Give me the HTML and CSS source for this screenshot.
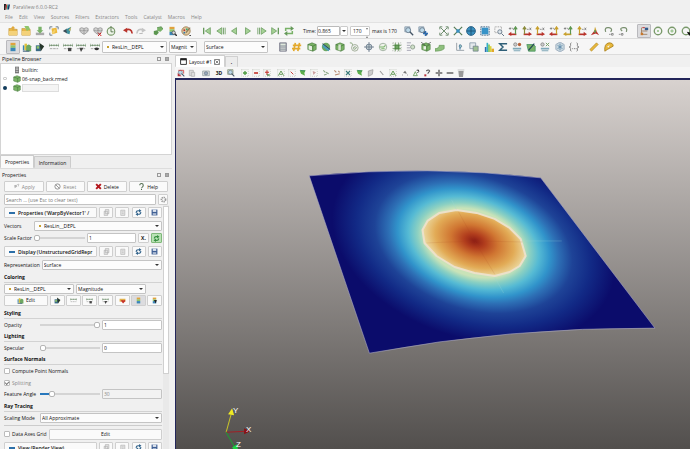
FILE: index.html
```
<!DOCTYPE html>
<html lang="en">
  <head>
    <meta charset="utf-8">
    <title>ParaView 6.0.0-RC2</title>
    <link rel="stylesheet" href="styles.css">
  </head>
  <body>
    <header class="titlebar">
      <svg class="logo" viewBox="0 0 12 12"><path d="M0 0h4l-1 12H0z" fill="#222"/><path d="M4 1h3L5 11H3z" fill="#c33"/><path d="M7 1h2L7 11H5z" fill="#2a8"/><path d="M9 1h3l-2 10H7z" fill="#136"/></svg>
      <span>ParaView 6.0.0-RC2</span>
    </header>
    <nav class="menu">
      <a href="#">File</a><a href="#">Edit</a><a href="#">View</a><a href="#">Sources</a><a href="#">Filters</a><a href="#">Extractors</a><a href="#">Tools</a><a href="#">Catalyst</a><a href="#">Macros</a><a href="#">Help</a>
    </nav>

    <div class="toolbar main">
      <div class="group" data-icons="open openstate savedata savegold flash"></div>
      <div class="group" data-icons="server serverx clock"></div>
      <div class="group" data-icons="undo redo"></div>
      <div class="group" data-icons="autoapply find palette"></div>
      <div class="group" data-icons="first prev back play next last loop"></div>
      <div class="time">
        <label for="time">Time:</label>
        <input id="time" class="timebox" value="0.865">
        <button class="drop" aria-label="times"></button>
        <span class="spin"><input id="step" aria-label="step" value="170"></span>
        <span>max is 170</span>
      </div>
      <div class="group" data-icons="zoomdata zoomplus"></div>
      <div class="group" data-icons="reset resetx globe fit zoombox axA axB axC axD axE axF iso rotr rotl"></div>
      <div class="group" data-icons="center ring ringdot ringpick" data-on="center"></div>
    </div>

    <div class="toolbar active">
      <div class="group" data-icons="bar editmap rescustom rescale rescalec rescalet rescalev" data-on="bar"></div>
      <div class="combos">
        <span class="select dot"><select aria-label="array"><option>ResLin__DEPL</option></select></span>
        <span class="select"><select aria-label="component"><option>Magnit</option></select></span>
        <span class="select"><select aria-label="display"><option>Surface</option></select></span>
      </div>
      <div class="group" data-icons="calc contour clip slice thresh stream glyph streamg subset extract box warp"></div>
      <div class="group" data-icons="plot plotsel histo sigma pts probe pts2 snow braces"></div>
      <div class="group" data-icons="ruler protractor"></div>
    </div>

    <main>
      <aside class="dock">
        <h2 class="docktitle">Pipeline Browser <span class="winbtns"><i></i><i class="x"></i></span></h2>
        <ul class="pipeline">
          <li><span class="eye"></span><svg class="node" viewBox="0 0 12 12"><path d="M3 1h6v10H3z" fill="#777"/><path d="M4 3h4M4 5h4M4 8h4" stroke="#eee"/></svg>builtin:</li>
          <li><span class="eye"><b class="off"></b></span><svg class="node" data-icon="cube"></svg>06-snap_back.rmed</li>
          <li><span class="eye"><b class="on"></b></span><svg class="node" data-icon="cube"></svg><span class="hidden-name"></span></li>
        </ul>
        <div class="tabs"><button class="tab current">Properties</button><button class="tab">Information</button></div>
        <h2 class="docktitle props-title">Properties <span class="winbtns"><i></i><i class="x"></i></span></h2>
        <div class="actions">
          <button class="btn dim"><svg data-icon="apply"></svg>Apply</button>
          <button class="btn dim"><svg data-icon="resetbtn"></svg>Reset</button>
          <button class="btn"><svg data-icon="delete"></svg>Delete</button>
          <button class="btn"><svg data-icon="help"></svg>Help</button>
        </div>
        <div class="search">
          <input aria-label="search" placeholder="Search ... (use Esc to clear text)">
          <button class="btn"><svg data-icon="gear"></svg></button>
        </div>

        <div class="scroll">
          <div class="panel">
            <div class="section"><button class="btn head">Properties ('WarpByVector1' /</button><span class="tools"></span></div>
            <div class="row tall"><label class="short" for="vec">Vectors</label><span class="select dot"><select id="vec"><option>ResLin__DEPL</option></select></span></div>
            <div class="row tall"><label class="short" for="scale">Scale Factor</label><input class="narrow" type="range" aria-label="scale slider" min="0" max="100" value="0"><input id="scale" class="field" value="1"><button class="btn mini">X.</button><button class="btn mini green"><svg data-icon="refreshg"></svg></button></div>
            <div class="section"><button class="btn head">Display (UnstructuredGridRepr</button><span class="tools"></span></div>
            <div class="row tall"><label for="rep">Representation</label><span class="select"><select id="rep"><option>Surface</option></select></span></div>
            <h3>Coloring</h3>
            <div class="row half"><span class="select dot"><select aria-label="color array"><option>ResLin__DEPL</option></select></span><span class="select"><select aria-label="color component"><option>Magnitude</option></select></span></div>
            <div class="row tall colors"><button class="btn edit"><svg data-icon="editmap"></svg>Edit</button><span class="colorbtns"></span></div>
            <h3 class="gap">Styling</h3>
            <div class="row"><label for="op">Opacity</label><input type="range" aria-label="opacity slider" min="0" max="100" value="100"><input id="op" class="field" value="1"></div>
            <h3>Lighting</h3>
            <div class="row"><label for="spec">Specular</label><input type="range" aria-label="specular slider" min="0" max="100" value="0"><input id="spec" class="field" value="0"></div>
            <h3>Surface Normals</h3>
            <div class="row tall"><label class="check"><input type="checkbox">Compute Point Normals</label></div>
            <div class="row"><label class="check dim"><input type="checkbox" checked disabled>Splitting</label></div>
            <div class="row"><label for="fa">Feature Angle</label><input class="filled" type="range" aria-label="angle slider" min="0" max="100" value="17"><input id="fa" class="field" value="30" disabled></div>
            <h3 class="gap">Ray Tracing</h3>
            <div class="row"><label for="sm">Scaling Mode</label><span class="select"><select id="sm"><option>All Approximate</option></select></span></div>
            <hr>
            <div class="row tall"><label class="check axes"><input type="checkbox">Data Axes Grid</label><button class="btn wide">Edit</button></div>
            <div class="section"><button class="btn head">View (Render View)</button><span class="tools"></span></div>
          </div>
          <div class="scrollbar"><i></i></div>
        </div>
      </aside>

      <section class="view">
        <div class="viewtabs">
          <button class="vtab current"><svg class="win" viewBox="0 0 12 12"><path d="M1 1h10v10H1z" fill="#fff" stroke="#222" stroke-width="1.5"/><path d="M1 1h10v3H1z" fill="#222"/></svg>Layout #1 <svg class="close" viewBox="0 0 12 12"><path d="M1 1h10v10H1zM3 3l6 6M9 3l-6 6" fill="none" stroke="#555" stroke-width="1.4"/></svg></button><button class="vtab plus">.</button>
        </div>
        <div class="toolbar viewbar">
          <div class="group" data-icons="camundo camredo"></div>
          <div class="group" data-icons="camera"></div>
          <div class="group"><button class="icon threed">3D</button><button class="icon"><svg data-icon="zoomg"></svg></button></div>
          <div class="group" data-icons="seladd selsub seltog"></div>
          <div class="group" data-icons="selA selB selC selD selE selF selG selC selI selJ selA selL query queryr plus minus trash"></div>
        </div>
        <svg class="render" viewBox="177 80 513 369" preserveAspectRatio="xMidYMid slice">
          <defs>
            <radialGradient id="outer" gradientUnits="userSpaceOnUse" cx="0" cy="0" r="3" gradientTransform="translate(474 243) rotate(18) scale(52 34)">
              <stop offset=".32" stop-color="#c9e3b8"/>
              <stop offset=".37" stop-color="#8bd0c2"/>
              <stop offset=".43" stop-color="#55bad4"/>
              <stop offset=".5" stop-color="#3194cb"/>
              <stop offset=".56" stop-color="#2d6fb5"/>
              <stop offset=".65" stop-color="#1e4397"/>
              <stop offset=".77" stop-color="#122a86"/>
              <stop offset=".93" stop-color="#0b0c6b"/>
            </radialGradient>
            <radialGradient id="inner" gradientUnits="userSpaceOnUse" cx="0" cy="0" r="1" gradientTransform="translate(475 241) rotate(18) scale(54 34)">
              <stop offset="0" stop-color="#8c1c14"/>
              <stop offset=".2" stop-color="#b23e1d"/>
              <stop offset=".45" stop-color="#d07632"/>
              <stop offset=".75" stop-color="#e2ab56"/>
              <stop offset="1" stop-color="#ecdca6"/>
            </radialGradient>
          </defs>
          <path d="M310 176Q430 165 541 178L655 328Q510 327 370 353z" fill="url(#outer)" stroke="#a9a7c4" stroke-width=".6"/>
          <path d="M423 230l5-9 12-8 17-3 20 3 18 6 15 9 11 11 5 17-6 10-10 6-15 4-20-3-20-6-18-11-12-13z" fill="url(#inner)" stroke="#ece1ca" stroke-width="2" stroke-linejoin="round"/>
          <path d="M452 200l5 10M495 277l9 16M526 241h36" stroke="#9fd8d8" stroke-width=".5" opacity=".5"/>
          <path d="M475 241l-16-29M475 241l48 1M475 241l20 33M475 241l-48 2" stroke="#a94520" stroke-width=".6" opacity=".2"/>
          <path d="M227 432l5-18" stroke="#c8c42a"/><path d="M229 414l4-6 2 7z" fill="#f0ea22"/>
          <path d="M227 432l20-1" stroke="#a02025"/><path d="M245 428l6 3-6 3z" fill="#8a1014"/>
          <path d="M227 432l8 14" stroke="#1f9a35"/><path d="M233 447l5-3 1 6h-4z" fill="#1fd040"/>
          <g class="axis"><text x="234" y="413">Y</text><text x="247" y="432">X</text><text x="237" y="447">Z</text></g>
        </svg>
      </section>
    </main>
    <script src="icons.js"></script>
  </body>
</html>
```

FILE: styles.css
```
* { box-sizing: border-box; }
html, body { height: 100%; }
body { margin: 0; display: flex; flex-direction: column; overflow: hidden; background: #f0f0f0; color: #111; font: 5px/8px "Open Sans", "Noto Sans", sans-serif; }
button, input, select { font: inherit; color: inherit; margin: 0; padding: 0; border-radius: 1px; }
svg { display: block; flex: none; }
h2, h3, ul { margin: 0; padding: 0; font-size: 5px; }

.titlebar { flex: none; height: 12px; display: flex; align-items: center; gap: 3px; padding: 1px 4px 0; color: #808080; }
.logo { width: 6px; height: 6px; }
.menu { flex: none; height: 10px; display: flex; align-items: center; gap: 6px; padding-left: 5px; }
.menu a { color: #888; text-decoration: none; }

/* toolbars */
.toolbar { flex: none; display: grid; align-items: center; background: #f6f6f6; }
.main { height: 17px; padding-left: 6px; border-top: 1px solid #e2e2e2; border-bottom: 1px solid #dcdcdc; column-gap: 3px; grid-template-columns: 68px 41px 27px 46px 100px 96px 32px 197px 56px; }
.main .group:nth-child(4) { padding-right: 4px; }
.main .group:nth-child(5), .main .group:nth-child(7), .main .group:nth-child(8) { padding-right: 4px; }
.active { height: 16px; padding-left: 6px; border-bottom: 1px solid #dcdcdc; grid-template-columns: 96px 174px 177px 134px 29px; }
.active .group:nth-child(3), .active .group:nth-child(4) { padding-right: 6px; }
.group { display: flex; justify-content: space-around; }
.icon { flex: 0 1 14px; height: 14px; min-width: 0; display: flex; align-items: center; justify-content: center; border: 0; background: none; }
.icon svg { width: 10px; height: 10px; }
.icon.on { background: #dcdcdf; border: 1px solid #b9b9bd; }
.time { display: flex; align-items: center; white-space: nowrap; }
.time label { width: 14px; }
.time .timebox { width: 23px; height: 10px; border: 1px solid #bbb; background: #fff; }
.drop { width: 8px; height: 10px; border: 1px solid #ccc; background: #fff; display: grid; place-items: center; margin-right: 2px; }
.drop::after, .select::after { content: ""; border: 2px solid transparent; border-top-color: #333; border-bottom: 0; }
.spin { position: relative; margin-right: 2px; }
.spin input { display: block; width: 20px; height: 10px; padding-left: 2px; border: 1px solid #ccc; background: #fff; }
.spin::after { content: ""; position: absolute; right: 2px; top: 2px; height: 6px; border: 1px solid transparent; border-top: 2px solid #777; border-bottom: 2px solid #777; }
.combos { display: grid; grid-template-columns: 65px 28px 64px; column-gap: 2px; }
.combos .select { height: 12px; }
.combos .select:last-child { margin-left: 5px; margin-right: -5px; }

.select { position: relative; flex: 1; height: 10px; display: block; }
.select select { display: block; width: 100%; height: 100%; appearance: none; border: 1px solid #c4c4c4; background: #fcfcfc; padding: 0 0 0 1px; }
.select.dot select { padding-left: 9px; }
.select::after { position: absolute; right: 3px; top: calc(50% - 1px); }
.select.dot::before { content: ""; position: absolute; left: 5px; top: calc(50% - 1px); width: 2px; height: 2px; background: #c8a02c; }

main { flex: 1; min-height: 0; display: flex; }

/* left dock */
.dock { flex: none; width: 172px; display: flex; flex-direction: column; min-height: 0; }
.docktitle { flex: none; height: 8px; display: flex; align-items: center; justify-content: space-between; padding: 0 3px 0 2px; font-weight: 400; }
.winbtns { display: flex; gap: 4px; }
.winbtns i { width: 4px; height: 4px; border: 1px solid #999; }
.winbtns .x { background: #aaa; }
.pipeline { flex: none; height: 92px; list-style: none; background: #fff; border: 1px solid #d4d4d4; padding-top: 1px; }
.pipeline li { height: 9px; display: flex; align-items: center; gap: 1px; }
.pipeline .eye { width: 11px; padding-left: 2px; }
.eye b { display: block; width: 4px; height: 3px; border-radius: 1px; }
.eye .off { border: 1px solid #ccc; }
.eye .on { height: 4px; border-radius: 2px; background: #123c5c; }
.node { width: 8px; height: 8px; }
.hidden-name { width: 37px; height: 8px; background: #f4f4f4; border: 1px solid #ddd; }
.tabs { flex: none; display: flex; align-items: flex-end; height: 14px; border-bottom: 1px solid #ddd; }
.tab { height: 12px; width: 37px; border: 1px solid #ccc; border-bottom: 0; background: #e3e3e3; }
.tab.current { width: 34px; height: 13px; background: #fafafa; }
.props-title { height: 11px; padding-right: 3px; }
.btn { display: flex; align-items: center; justify-content: center; gap: 2px; border: 1px solid #cfcfcf; background: #fafafa; white-space: nowrap; }
.btn svg { width: 7px; height: 7px; }
.dim { color: #888; }
.actions { flex: none; display: grid; grid-template-columns: repeat(4, 1fr); gap: 2px; padding: 1px 4px 2px; }
.actions .btn { height: 11px; }
.search { flex: none; display: flex; gap: 2px; padding: 0 4px; height: 11px; }
.search input { flex: 1; border: 1px solid #c4c4c4; background: #fff; padding-left: 1px; }
.search input::placeholder { color: #777; }
.search .btn { width: 10px; }

.scroll { flex: 1; min-height: 0; display: flex; overflow: hidden; }
.panel { flex: 1; min-width: 0; padding: 0 1px 0 4px; }
.scrollbar { width: 6px; margin-right: 3px; background: #e9e9e9; }
.scrollbar i { display: block; height: 168px; margin-top: 1px; background: #fff; border: 1px solid #d0d0d0; }
.section { height: 15px; display: flex; align-items: center; gap: 2px; }
.head { flex: none; width: 93px; height: 11px; font-weight: 600; justify-content: flex-start; gap: 3px; padding-left: 4px; }
.head::before { content: ""; flex: none; width: 6px; height: 2px; background: #2c6fa8; }
.tools { flex: 1; display: flex; justify-content: space-between; }
.tools .btn { width: 14px; height: 11px; }
.row { height: 11px; display: flex; align-items: center; gap: 2px; }
.row.tall { height: 12px; }
.row > label { flex: none; min-width: 34px; white-space: nowrap; }
.row > .short { min-width: 28px; }
.field { flex: 1; min-width: 0; height: 10px; border: 1px solid #c4c4c4; background: #fff; padding-left: 1px; }
.field:disabled { background: #f2f2f2; color: #888; }
.mini { width: 11px; height: 10px; font-weight: 700; }
.green { background: #b9e2b5; border-color: #7fb87a; }
.row.half .select { flex: 0 0 70px; }
.colors .btn { height: 11px; }
.edit { width: 44px; }
.colorbtns { flex: 1; display: flex; justify-content: space-between; }
.colorbtns .btn { width: 15px; }
.colorbtns .on { background: #dcdcdf; }
h3 { height: 12px; padding-top: 2px; border-bottom: 1px solid #d2d2d2; }
h3.gap { height: 13px; padding-top: 3px; }
hr { margin: 2px 0; border: 0; border-top: 1px solid #ccc; }
.check { display: flex; align-items: center; gap: 2px; }
.row > .axes { min-width: 43px; }
.wide { flex: 1; height: 11px; }
input[type="checkbox"] { appearance: none; width: 6px; height: 6px; border: 1px solid #bbb; background: #fff; display: grid; place-items: center; }
input[type="checkbox"]:checked::after { content: ""; width: 3px; height: 2px; border: 1px solid #777; border-top: 0; border-right: 0; transform: rotate(-45deg); }
input[type="range"] { appearance: none; flex: none; width: 60px; height: 8px; background: none; }
input[type="range"].narrow { width: 51px; }
input[type="range"]::-webkit-slider-runnable-track { height: 2px; background: #d4d4d4; }
input[type="range"].filled::-webkit-slider-runnable-track { background: linear-gradient(90deg, #2878bd 18%, #d4d4d4 18%); }
input[type="range"]::-webkit-slider-thumb { appearance: none; width: 6px; height: 6px; margin-top: -2px; border: 1px solid #b5b5b5; border-radius: 2px; background: #fff; }

/* render view */
.view { flex: 1; min-width: 0; margin-left: 3px; display: flex; flex-direction: column; }
.viewtabs { flex: none; display: flex; height: 12px; align-items: flex-end; }
.vtab { height: 11px; border: 1px solid #d0d0d0; border-bottom: 0; background: #ececec; }
.vtab.current { display: flex; align-items: center; justify-content: center; gap: 2px; width: 50px; background: #fff; height: 12px; white-space: nowrap; }
.plus { width: 13px; font-weight: 700; }
.win { width: 7px; height: 7px; }
.close { width: 6px; height: 6px; }
.viewbar { height: 11px; column-gap: 2px; grid-template-columns: 23px 11px 24px 34px 192px; }
.viewbar .icon { flex-basis: 11px; height: 11px; }
.viewbar .icon svg { width: 8px; height: 8px; }
.viewbar .threed { font-weight: 700; }
.render { flex: 1; min-height: 0; width: 100%; border: solid #23265a; border-width: 2px 0 0 1px; background: linear-gradient(#d8d2cf, #524f4d); }
.axis { fill: #fff; font: 8px/8px "Liberation Sans", sans-serif; }
```

FILE: icons.js
```
// every icon is drawn on a 12x12 grid
var folder = '<path d="M1 3h4l1 1h5v7H1z" fill="#e8b84a" stroke="#b98a2c" stroke-width=".6"/><path d="M1 6h10v5H1z" fill="#f4d27a"/>';
var server = '<path d="M1 3q2-2 5 0 3-2 5 0v3q-2 3-5 4-3-1-5-4z" fill="#d0d0d0" stroke="#8a8a8a" stroke-width=".8"/><path d="M1 5q3 2 5 0 3 2 5 0M6 3v7" fill="none" stroke="#8a8a8a" stroke-width=".8"/>';
var cube = '<path d="M1 3l5-2 5 2v6l-4 2-6-2z" fill="#7ab465" stroke="#527f47" stroke-width=".8"/><path d="M1 3l6 2v6M7 5l4-2" fill="none" stroke="#41703a" stroke-width=".8"/>';
var lens = '<circle cx="5" cy="5" r="3" fill="#bcd8e8" stroke="#678" stroke-width="1"/><path d="M7 7l4 4" stroke="#456" stroke-width="1.6"/>';
var bar = '<path d="M3 1h6v3H3z" fill="#e0a23c"/><path d="M3 4h6v3H3z" fill="#8fc46a"/><path d="M3 7h6v4H3z" fill="#3a86b8"/>';
var ruler = '<path d="M0 2v4M12 2v4M0 4h12M3 3v2M6 3v2M9 3v2" stroke="#6f8f6c" stroke-width="1" fill="none"/><path d="M1 8h3M5 8h3M9 8h2" stroke="#999"/>';
var ring = '<circle cx="6" cy="6" r="4.5" fill="none" stroke="#7a9a6b" stroke-width="1.6"/>';
var dots = '<path d="M1 1h10v10H1z" fill="none" stroke="#9aa694" stroke-width="1" stroke-dasharray="1 2"/>';
var G = '#79b268', GD = '#66995b';

function tri(d) { return '<path d="' + d + '" fill="#a6d296" stroke="' + GD + '" stroke-width=".9"/>'; }
function axis(a, b, flip) {
  var m = flip ? ' transform="matrix(-1 0 0 1 12 0)"' : '';
  return '<g' + m + '><path d="M2 10h7" stroke="' + a + '" stroke-width="2"/><path d="M3 10V2M1 4l2-3 2 3" stroke="' + b + '" stroke-width="1.4" fill="none"/><path d="M8 7l4 3-4 2z" fill="' + a + '"/></g>' +
    '<path d="' + (flip ? 'M1 3h3M2.500 1.500v3M5 2l2 3' : 'M6 4h2M9 2l2 3M11 2l-2 3') + '" stroke="#666" stroke-width=".8"/>';
}
function line(d, c, w) { return '<path d="' + d + '" fill="none" stroke="' + c + '" stroke-width="' + (w || 1.2) + '"/>'; }
function fill(d, c) { return '<path d="' + d + '" fill="' + c + '"/>'; }

var icons = {
  open: folder + fill('M6 0l3 3H7v2H5V3H3z', '#e0a83a'),
  openstate: folder + fill('M4 0h5l2 4-4 2z', '#8fc46a'),
  savedata: fill('M1 8h10v3H1z', '#aaa') + fill('M4 1h4v4h2L6 9 2 5h2z', '#79b268'),
  savegold: fill('M3 3l6-1 1 6-6 2z', '#edb93c') + line('M1 4V1h3M8 1h3v3M1 8v3h3', '#5a6b7a', 1) + fill('M3 8l4-4 1 2-3 4z', '#f3d16c'),
  flash: fill('M1 6l5-3v6z', '#3a4a55') + fill('M5 4l6-3-2 9-3-1z', '#40909c') + fill('M8 5l3-4-1 5z', '#e0c060'),
  server: server,
  serverx: server + line('M6 8l4 4M10 8l-4 4', '#c22'),
  clock: '<circle cx="6" cy="6.500" r="4.500" fill="#eef4ea" stroke="#7a9a6b" stroke-width="1.400"/>' + line('M6 3v4h3M5 1h2', '#4b6b40', 1),
  undo: line('M3 5q7-3 8 4', '#b8322a', 2) + fill('M0 5l5-3v6z', '#b8322a'),
  redo: line('M9 5Q2 2 1 9', '#c4c4c4', 2) + fill('M12 5L7 2v6z', '#c4c4c4') + line('M4 9h4', '#bbb'),
  autoapply: fill('M5 2l5-1 2 3-3 3-4-1z', '#79b268') + fill('M1 6l4-1 2 3-3 3-3-1z', '#5c9650') + line('M5 2l5-1 2 3', GD),
  find: bar + line('M8 8l4 4', '#333', 1.8) + '<circle cx="8" cy="8" r="2" fill="#ddd" stroke="#555"/>',
  palette: '<circle cx="6" cy="6" r="5" fill="#e0c79c" stroke="#9a7a4a"/>' + fill('M3 4h2v2H3z', '#b33') + fill('M6 3h2v2H6z', '#3a7') + fill('M3 7h2v2H3z', '#37a') + line('M6 8l5-6', '#875', 1.4) + fill('M10 11h2v1h-2z', '#111'),
  first: line('M2 2v8', GD, 1.6) + tri('M10 2v8L4 6z'),
  prev: tri('M7 2v8L1 6z') + line('M9 2v8M11 2v8', GD, 1),
  back: tri('M9 2v8L3 6z'),
  play: tri('M3 2v8l6-4z'),
  next: line('M1 2v8M3 2v8', GD, 1) + tri('M5 2v8l6-4z'),
  last: line('M10 2v8', GD, 1.6) + tri('M2 2v8l6-4z'),
  loop: line('M2 6V3h7M10 6v3H3', G, 1.8) + fill('M8 0l4 3-4 3z', GD) + fill('M4 6L0 9l4 3z', GD),
  zoomdata: '<path d="M1 1h6v6H1z" fill="#c4d8e4" stroke="#89a"/>' + lens,
  zoomplus: '<path d="M1 1h6v6H1z" fill="#c4d8e4" stroke="#89a"/>' + lens + line('M9 6v6M6 9h6', '#2f6db0', 1.8),
  reset: line('M2 2l8 8M10 2l-8 8', '#567a55', 1) + line('M1 4V1h3M8 1h3v3M1 8v3h3M8 11h3V8', '#567a55', 1),
  resetx: line('M1 1l10 10M11 1L1 11', '#567a55', 1.4) + fill('M4 4h4v4H4z', '#3a8fc0'),
  globe: '<circle cx="6" cy="6" r="5.300" fill="#3a8fbf" stroke="#245a80"/>' + line('M1 6h10M6 1v10', '#1d4f70', 1),
  fit: '<path d="M1 1h10v10H1z" fill="none" stroke="#357" stroke-dasharray="2 1"/>' + fill('M2 2h8v8H2z', '#3793c8'),
  zoombox: '<path d="M1 1h8v7H1z" fill="none" stroke="#888" stroke-dasharray="1 1"/><circle cx="7" cy="7" r="2.500" fill="#dde6ec" stroke="#678"/>' + line('M9 9l3 3', '#678'),
  axA: axis('#b8322a', '#5c9650', true), axB: axis('#b8322a', '#8a8a3a'), axC: axis('#b8322a', '#c8a02c'),
  axD: axis('#b8322a', '#c8a02c', true), axE: axis('#c8a02c', '#5c9650', true), axF: axis('#b8322a', '#c8a02c'),
  iso: fill('M6 1l2 5H5z', '#c8a02c') + fill('M1 11l4-5 2 3z', '#b8322a') + fill('M11 11L7 5 5 8z', '#b8322a') + fill('M5 5h2v3H5z', '#5c9650'),
  rotr: line('M2 7Q0 1 6 2q5 1 2 5', '#7a9070', 1.5) + line('M6 10h2M9 9v2h2V9z', '#666', .8),
  rotl: line('M10 7q2-6-4-5Q1 3 5 6', '#7a9070', 1.5) + line('M1 10h2M4 9v2h2V9z', '#666', .8),
  center: line('M3 2v8h7M3 6h7', '#9a7a5a', 1) + fill('M7 2h4v3H7z', '#345a8a') + fill('M2 8h3v3H2z', '#c8782c') + line('M4 2h3', '#b33'),
  ring: ring + fill('M5 5h2v2H5z', '#79b268'),
  ringdot: ring + line('M4 6h4M6 4v4', '#79b268', 1),
  ringpick: ring + fill('M7 7l5 1-2 4z', '#111'),

  bar: bar,
  editmap: fill('M1 4h2v6H1z', '#3a86b8') + fill('M3 2h3v8H3z', '#e0c23c') + fill('M5 5q3-4 6 0v6H5z', '#6ea862') + line('M1 11h8', '#357'),
  rescustom: fill('M1 4h6v7H1z', '#3a6b86') + fill('M5 1l6 4-4 6z', '#26362a') + fill('M2 5h3v3H2z', '#8fc46a'),
  rescale: ruler,
  rescalec: ruler + fill('M6 7h4v4H6z', '#444'),
  rescalet: ruler + fill('M6 12l-2-5h5z', '#444'),
  rescalev: ruler + fill('M5 8q3-3 6 0-3 4-6 0z', '#333'),
  calc: '<path d="M2 1h8v10H2z" fill="#9aa3a8" stroke="#778"/>' + fill('M3 2h6v2H3z', '#dfe8dd') + line('M3 6h6M3 8h6M3 10h6', '#ddd', .8),
  contour: line('M4 1L2 11M9 1L7 11M1 4h10M0 8h10', '#e3a92c', 2),
  clip: cube + fill('M2 4l4 1v5L2 9z', '#e8efe4'),
  slice: '<circle cx="6" cy="6" r="5" fill="#6ea862"/>' + fill('M2 2l9 6-2 3-7-5z', '#4aa0b8') + line('M2 2l9 7', '#345'),
  thresh: cube + fill('M4 3h3v7H4z', '#d9e4d4'),
  stream: '<circle cx="7" cy="7" r="4" fill="#eee" stroke="#9aa890"/>' + line('M1 1q4 0 3 3M5 7q3-3 4 0-2 3-4 1', '#7a9a6b', 1),
  glyph: '<circle cx="6" cy="6" r="3.500" fill="#c8d4d8" stroke="#678"/>' + line('M6 0v12M0 6h12', '#678', 1),
  streamg: '<circle cx="6" cy="6" r="4.500" fill="#eef3ea" stroke="#9a9"/>' + line('M2 6h5l2-2M4 8h4', G, 1.3),
  subset: dots + fill('M3 3h6v6H3z', '#6ea862') + line('M1 4h10M1 8h10M4 1v10M8 1v10', '#4b8040', .8),
  extract: line('M1 1h5M1 4h4M1 7h4M1 10h5', '#99a', 1) + '<circle cx="8" cy="6" r="2.500" fill="#cfe0c8" stroke="#898"/>',
  box: cube + line('M0 0l5 4M12 0L8 3', '#444', .8) + fill('M3 5h3v4H3z', '#e8efe4'),
  warp: fill('M0 8q5 0 5-4h6v4q-3 3-11 3z', '#8fc07e') + line('M0 8q5 0 5-4h6v4q-3 3-11 3z', GD, .8),
  plot: line('M2 1v9h9', '#8a949c', 1) + line('M6 3v6', '#3a78a8', 1.4) + '<circle cx="6.500" cy="5" r="1.500" fill="#9cc" stroke="#357" stroke-width=".6"/>',
  plotsel: '<path d="M1 1h7v7H1z" fill="#e4e9ec" stroke="#89a"/>' + fill('M5 5h6v6H5z', '#9fc093') + line('M5 5h6v6H5z', '#678', .8),
  histo: fill('M1 6h2v6H1z', '#2f6db0') + fill('M3 1h2v11H3z', '#3ab0c8') + fill('M5 3h2v9H5z', '#7cc45a') + fill('M7 5h2v7H7z', '#d9d23c') + fill('M9 8h3v4H9z', '#e3a92c'),
  sigma: line('M10 3V2H2l4 4-4 4h8V9', '#2f5f78', 1.8),
  pts: fill('M1 7h10v2H1zM2 10h8v1H2z', '#7fa8b8') + '<circle cx="4" cy="3" r="2" fill="#ccc" stroke="#888"/><circle cx="9" cy="3" r="2" fill="#b8623a"/>',
  probe: '<path d="M1 3h8l2 2v6H3z" fill="#79b268" stroke="#4f9a6a"/>' + line('M3 10l7-8', '#245', 1.4),
  pts2: fill('M1 7h10v2H1zM2 10h8v1H2z', '#7fa8b8') + '<circle cx="3" cy="3" r="2" fill="#ccc" stroke="#888"/>' + line('M7 1l4 4M11 1L7 5', '#79a068'),
  snow: '<path d="M6 0l5 3v6l-5 3-5-3V3z" fill="#c9d8e0" stroke="#9ab"/>' + line('M6 2v8M3 4l6 4M9 4L3 8', '#5a88a8', 1),
  braces: line('M3 1q-2 0-1 3 0 2-2 2 2 0 2 2-1 3 1 3M9 1q2 0 1 3 0 2 2 2-2 0-2 2 1 3-1 3', '#777', 1) + line('M4 8h1M6 8h1M8 8h1', '#555', 1),
  ruler: fill('M1 9l8-8 2 2-8 8z', '#e8b83c') + line('M1 9l8-8 2 2-8 8z', '#a8801c', .7),
  protractor: '<path d="M1 11Q0 2 6 1q5 0 5 4l-7 4z" fill="#e8b83c" stroke="#a8801c"/>' + fill('M4 5l3-1-2 3z', '#f6f6f6'),

  cube: cube,
  apply: fill('M2 4l4-1 1 3-4 3z', '#b4b4b4') + line('M7 3l3-1-1 4', '#b4b4b4'),
  resetbtn: '<circle cx="6" cy="6" r="4.500" fill="none" stroke="#888" stroke-width="1.500"/>' + line('M3 3l6 6', '#888', 1.4),
  'delete': line('M2 2l8 8M10 2l-8 8', '#b3161c', 3.4),
  help: line('M3 4q0-3 3-3t3 3-3 4M6 10v2', '#4f6a4c', 1.8),
  gear: '<circle cx="6" cy="6" r="3.500" fill="none" stroke="#999" stroke-width="3" stroke-dasharray="2 1"/>',
  refreshg: line('M2 6q1-4 5-3M10 6q-1 4-5 3', '#2f8a3a', 1.8) + fill('M7 0l4 3-4 3z', '#2f8a3a') + fill('M5 6l-4 3 4 3z', '#2f8a3a'),
  refresh: line('M2 7q0-5 6-4M10 5q0 5-6 4', '#2c5f88', 1.8) + fill('M7 0l4 3-4 3z', '#2c5f88') + fill('M5 6L1 9l4 3z', '#2c5f88'),
  copy: '<path d="M4 1h6v7H4zM2 4h6v7H2z" fill="#e4e4e4" stroke="#aaa"/>',
  paste: '<path d="M3 2h7v9H3z" fill="#e4e4e4" stroke="#aaa"/>' + line('M5 5h3M5 8h3', '#bbb'),
  save: fill('M1 1h10v10H1z', '#3f5f94') + fill('M3 1h6v4H3z', '#dde4ee') + fill('M3 7h6v4H3z', '#a9b8d0'),
  heart: fill('M1 3h10v5H1z', '#e0b04a') + fill('M3 6q3-2 4 0 3-2 4 1l-4 4z', '#c8322a'),
  barpick: bar + fill('M5 5h5l-2 6z', '#222'),

  camundo: lens + fill('M1 6l6 5H1z', '#b8323a') + line('M2 2h8v5', '#c33'),
  camredo: '<path d="M2 2h6v8H2z" fill="#ddd" stroke="#aaa"/><path d="M5 5h5v6H5z" fill="#ddd" stroke="#aaa"/>',
  camera: '<path d="M1 3h10v7H1z" fill="#ddd" stroke="#899"/><circle cx="6" cy="6.500" r="2.500" fill="#9ab" stroke="#678"/>',
  zoomg: '<path d="M1 1h8v7H1z" fill="#d4e4cc" stroke="#7a8a70"/>' + lens,
  seladd: dots + line('M6 3v6M3 6h6', '#4b9a40', 2),
  selsub: dots + line('M3 6h6', '#c2322a', 2.4),
  seltog: dots + line('M6 2v7M3 5h6', '#c2322a', 1.6) + line('M6 9h4', '#4b8040', 2),
  selA: line('M2 10l4-7 4 7M4 8h4', '#5c9650', 1.4) + dots,
  selB: dots + line('M4 4l4 4', '#c2322a', 1.4),
  selC: fill('M1 2h9l-2 4 1 4-6-3z', '#5cae4a') + line('M2 2l7 1', '#386'),
  selD: dots + fill('M4 3l5 2-4 4z', '#c9a0a0'),
  selE: line('M2 2l3 3M6 5l4 2M3 9l4-1', '#8aa684', 1.6),
  selF: line('M2 2l3 3M8 3l2 2M3 9l7-2', '#b88a70', 1.6),
  selG: dots + line('M3 3l6 6M9 3L3 9', '#3a7a7a', 1.6),
  selI: '<path d="M2 3l7-2-1 7-6 3z" fill="#ccc" stroke="#999"/>',
  selJ: line('M3 3l5 6', '#999', 1.6),
  selL: line('M6 3v1M2 9h1M9 9h1M4 6l2-2 2 3', '#777', 1.6),
  query: line('M2 10l3-6 3 6z', '#5c9650') + line('M7 2q4-2 3 2L8 6', '#333', 1.4),
  queryr: line('M5 3q3-3 5 0L7 7', '#555', 1.6) + fill('M2 8h3v3H2z', '#b8323a'),
  plus: line('M6 1v10M1 6h10', '#8a8a8a', 3),
  minus: line('M1 6h10', '#8a8a8a', 3),
  trash: fill('M2 3h8l-1 9H3zM1 1h10v1H1z', '#999')
};

function paint(svg, name) {
  svg.setAttribute('viewBox', '0 0 12 12');
  svg.innerHTML = icons[name];
}
function button(cls, name) {
  return '<button class="' + cls + '" aria-label="' + name + '"><svg data-icon="' + name + '"></svg></button>';
}

document.querySelectorAll('[data-icons]').forEach(function (group) {
  group.innerHTML = group.dataset.icons.split(' ').map(function (name) {
    return button(name == group.dataset.on ? 'icon on' : 'icon', name);
  }).join('');
});
document.querySelectorAll('.tools').forEach(function (el) {
  el.innerHTML = ['copy', 'paste', 'refresh', 'save'].map(function (n) { return button('btn', n); }).join('');
});
document.querySelector('.colorbtns').innerHTML = ['rescustom', 'rescale', 'rescalec', 'rescalet', 'heart', 'bar', 'barpick'].map(function (n) {
  return button(n == 'bar' ? 'btn on' : 'btn', n);
}).join('');
document.querySelectorAll('svg[data-icon]').forEach(function (svg) {
  paint(svg, svg.dataset.icon);
});
```
